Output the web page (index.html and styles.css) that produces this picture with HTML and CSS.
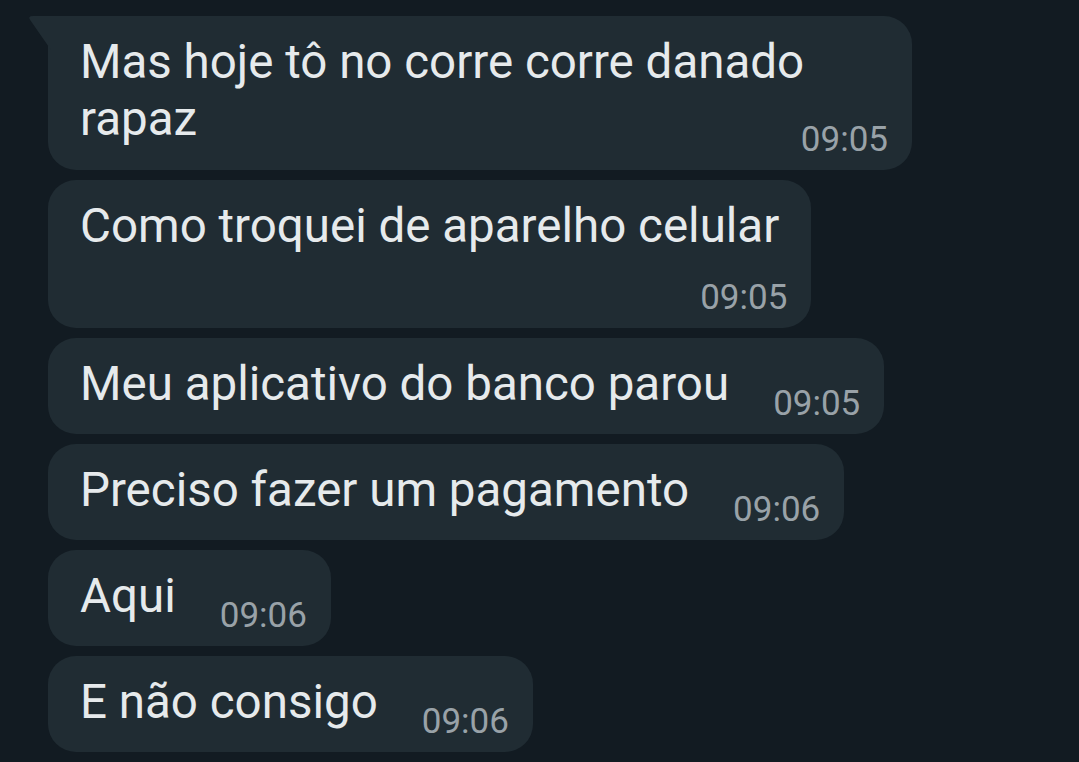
FILE: index.html
```html
<!DOCTYPE html>
<html>
<head>
<meta charset="utf-8">
<link rel="stylesheet" href="styles.css">
</head>
<body>
<div class="chat">
  <div class="bubble stacked first">
    <svg class="tail" width="24" height="34" viewBox="0 0 24 34"><path d="M24 0 H6 Q0 0 3.5 4.5 L24 34 Z" fill="#202c33"/></svg>
    <div class="text">Mas hoje tô no corre corre danado<br>rapaz</div>
    <div class="time overlap">09:05</div>
  </div>
  <div class="bubble stacked">
    <div class="text narrow">Como troquei de aparelho celular</div>
    <div class="time below">09:05</div>
  </div>
  <div class="bubble">
    <div class="text">Meu aplicativo do banco parou</div>
    <div class="time">09:05</div>
  </div>
  <div class="bubble">
    <div class="text">Preciso fazer um pagamento</div>
    <div class="time">09:06</div>
  </div>
  <div class="bubble">
    <div class="text">Aqui</div>
    <div class="time">09:06</div>
  </div>
  <div class="bubble">
    <div class="text">E não consigo</div>
    <div class="time">09:06</div>
  </div>
</div>
</body>
</html>
```
FILE: styles.css
```css
html, body {
  margin: 0;
  padding: 0;
  background: #121b22;
  width: 1079px;
  height: 762px;
  overflow: hidden;
  font-family: Roboto, "Liberation Sans", sans-serif;
}
.chat {
  display: flex;
  flex-direction: column;
  align-items: flex-start;
  gap: 10px;
  padding: 16px 0 0 48px;
}
.bubble {
  position: relative;
  display: flex;
  align-items: flex-start;
  gap: 44px;
  background: #202c33;
  border-radius: 28px;
  padding: 18px 24px 10px 32px;
  box-sizing: border-box;
}
.bubble.first {
  border-top-left-radius: 0;
  width: 864px;
  height: 154px;
}
.bubble.stacked {
  flex-direction: column;
  gap: 0;
}
.bubble.stacked .time {
  align-self: flex-end;
}
.tail {
  position: absolute;
  left: -21px;
  top: 0;
}
.text {
  color: #e6eaec;
  font-size: 47.5px;
  line-height: 57px;
}
.text.narrow {
  margin-right: 8px;
}
.time {
  color: #99a2a8;
  font-size: 35px;
  line-height: 40px;
  margin-top: 28px;
}
.time.overlap {
  margin-top: -28px;
}
.time.below {
  margin-top: 23px;
}
```
